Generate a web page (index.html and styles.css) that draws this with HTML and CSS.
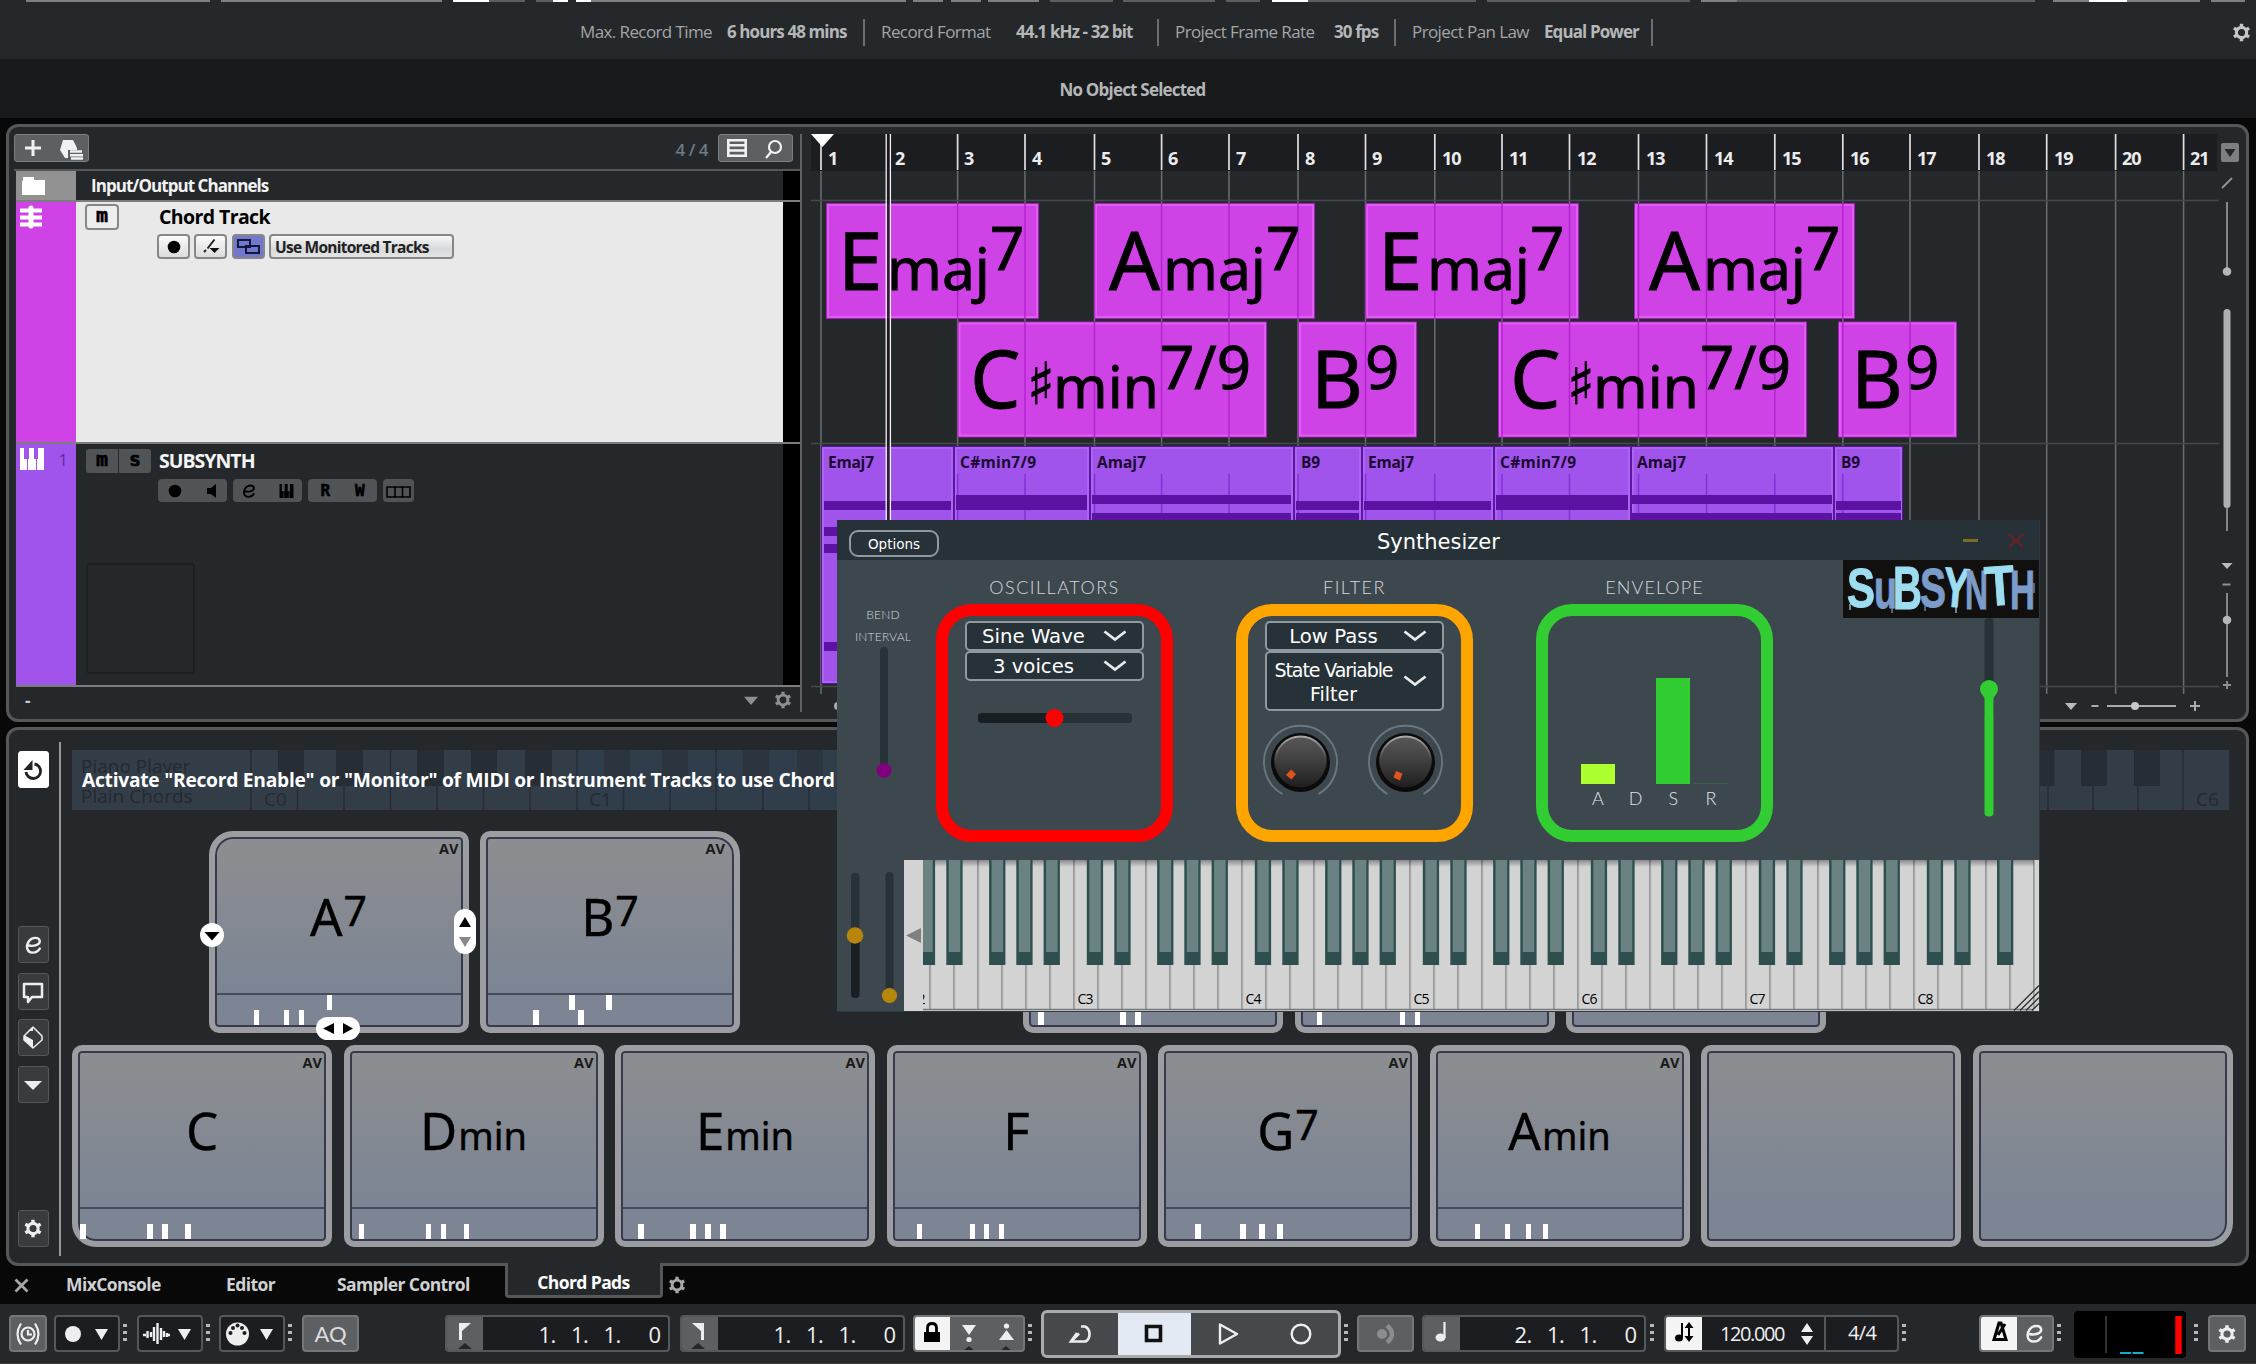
FILE: index.html
```html
<!DOCTYPE html>
<html lang="en">
<head>
<meta charset="utf-8">
<title>Project</title>
<link rel="stylesheet" href="styles.css">
</head>
<body>
<svg class="defs" width="0" height="0" aria-hidden="true">
  <symbol id="gear" viewBox="0 0 20 20"><path fill="none" stroke="currentColor" stroke-width="3.2" d="M10 4.6a5.4 5.4 0 1 0 0 10.8a5.4 5.4 0 1 0 0-10.8z"/><path stroke="currentColor" stroke-width="3.6" d="M10 .8v3.4M10 15.8v3.4M2 5.4l3 1.7M15 12.9l3 1.7M2 14.600l3-1.7M15 7.100l3-1.7"/></symbol>
  <symbol id="down" viewBox="0 0 12 12"><path fill="currentColor" d="M0 1h12L6 12z"/></symbol>
  <symbol id="e" viewBox="0 0 20 20"><path fill="none" stroke="currentColor" stroke-width="2.600" stroke-linecap="round" d="M4.500 10.500C10 12 17.500 10 17 5.500C16.500 1.500 9 .5 5 5.500C1 11 2.500 18.500 9 18.500C12.500 18.500 15.500 16.500 17 14"/></symbol>
  <symbol id="chev" viewBox="0 0 24 12"><path fill="none" stroke="#e8eaeb" stroke-width="2.800" d="M1.500 1.500L12 9.500L22.500 1.500"/></symbol>
  <symbol id="keys" viewBox="0 0 24 24"><path fill="currentColor" d="M0 0h4v12h3v12H0zM9 0h5v12h2v12H8V12h1zM18 0h6v24h-7V12h1z"/></symbol>
</svg>

<svg class="strip" width="2256" height="2" viewBox="0 0 2256 2"><path stroke="#7d8083" stroke-width="2" d="M26 1H210M221 1H442M591 1H906M913 1H943M951 1H981M988 1H1039M1701 1H1737M2053 1H2089M2127 1H2200M2211 1H2245"/><path stroke="#5c5f62" stroke-width="2" d="M489 1H525M536 1H553M1050 1H1113M1123 1H1215M1226 1H1260M1308 1H1476M1487 1H1690M1737 1H2035"/><path stroke="#fff" stroke-width="2" d="M453 1H489M553 1H568M576 1H591M1272 1H1308M2089 1H2127"/></svg>

<header class="infoline">
  <dl>
    <dt style="width:147px">Max. Record Time</dt><dd style="width:138px">6 hours 48 mins</dd>
    <dt style="width:135px">Record Format</dt><dd style="width:143px">44.1 kHz - 32 bit</dd>
    <dt style="width:159px">Project Frame Rate</dt><dd style="width:62px">30 fps</dd>
    <dt style="width:132px">Project Pan Law</dt><dd style="width:109px">Equal Power</dd>
  </dl>
  <svg class="gear" width="19" height="19"><use href="#gear"/></svg>
</header>
<div class="objline">No Object Selected</div>

<main>
<section class="panel project">
  <div class="tracklist">
    <div class="tl-tools">
      <div class="toolpair"><svg width="73" height="26" viewBox="0 0 73 26"><path stroke="#f2f2f2" stroke-width="3" d="M10 13h16M18 5v16"/><path fill="#f2f2f2" d="M48 5h10l4 8v2h-9v8h-3l-5-8z"/><path stroke="#f2f2f2" stroke-width="2.500" d="M55 16.500h12M55 20.200h13M56 23.500h12"/></svg></div>
      <span class="count">4 / 4</span>
      <div class="toolpair"><svg width="73" height="26" viewBox="0 0 73 26"><path fill="none" stroke="#f2f2f2" stroke-width="2.600" d="M9.300 5.300h17.400v15.400H9.300zM9 10.300h18M9 15.500h18"/><g fill="none" stroke="#f2f2f2" stroke-width="2.200"><circle cx="56" cy="12" r="6"/><path d="M52 17l-5 6"/></g></svg></div>
    </div>
    <div class="track folder">
      <div class="color"><svg width="26" height="22" viewBox="0 0 26 22"><path fill="#fff" d="M2 2h11v3h11v15H1V6h1z"/></svg></div>
      <div class="body"><span>Input/Output Channels</span></div><i class="end"></i>
    </div>
    <div class="track chord">
      <div class="color"><svg width="22" height="24" viewBox="0 0 22 24"><path stroke="#fff" stroke-width="4" d="M0 5.500h22M0 12.500h22M0 19.500h22"/><path stroke="#fff" stroke-width="5" stroke-linecap="round" d="M11 3v18"/></svg></div>
      <div class="body">
        <div class="line1"><b class="ms">m</b><span class="name">Chord Track</span></div>
        <div class="line2">
          <b class="btn"><svg width="33" height="25"><circle cx="17" cy="13" r="6.300"/></svg></b>
          <b class="btn"><svg width="33" height="25"><path fill="none" stroke="#222" stroke-width="2" d="M10 18l2-2M13.500 14.500l7-9"/><path fill="#111" d="M15.500 14h10l-5 5z"/></svg></b>
          <b class="btn on"><svg width="33" height="25"><path fill="none" stroke="#15173a" stroke-width="2" d="M6 6h12v7H6zM14 12h13v7H14z"/></svg></b>
          <span class="combo">Use Monitored Tracks</span>
        </div>
      </div><i class="end"></i>
    </div>
    <div class="track inst">
      <div class="color"><svg width="24" height="22" viewBox="0 0 24 24" preserveAspectRatio="none" color="#fff"><use href="#keys"/></svg><small>1</small></div>
      <div class="body">
        <div class="line1"><b class="ms">m</b><b class="ms s">s</b><span class="name">SUBSYNTH</span></div>
        <div class="line2">
          <b class="grp"><svg width="69" height="23"><circle cx="17" cy="12" r="6.300"/><path d="M49 9h4l5-4v14l-5-4h-4z"/></svg></b>
          <b class="grp"><svg width="69" height="23"><use href="#e" x="9" y="5" width="14" height="14"/><use href="#keys" x="45" y="5" width="17" height="14"/></svg></b>
          <b class="grp rw"><span>R</span><span>W</span></b>
          <b class="grp"><svg width="31" height="23"><path fill="none" stroke="#000" stroke-width="1.600" d="M4 8h23v10H4zM12 8v10M19.500 8v10"/></svg></b>
        </div>
        <div class="empty"></div>
      </div><i class="end"></i>
    </div>
    <div class="tl-foot"><span>-</span><svg width="14" height="9" viewBox="0 0 12 12" preserveAspectRatio="none"><use href="#down"/></svg><svg width="18" height="18"><use href="#gear"/></svg></div>
  </div>
  <div class="timeline">
  <svg width="1409" height="586" viewBox="811 134 1409 586">
    <defs>
      <path id="bars" d="M821 0V700M957.600 0V700M1025 0V700M1094.500 0V700M1161.600 0V700M1229 0V700M1298 0V700M1365.500 0V700M1434.800 0V700M1502 0V700M1569.500 0V700M1638.500 0V700M1706.500 0V700M1774.800 0V700M1842.800 0V700M1910 0V700M1979 0V700M2046.700 0V700M2115.600 0V700M2183.600 0V700"/>
      <clipPath id="cr"><path d="M811 134h1409v36H811z"/></clipPath>
      <clipPath id="cg"><path d="M811 171h1409v523H811z"/></clipPath>
      <clipPath id="cb"><path d="M826 204H1039V319H826zM1094 204H1315V319H1094zM1365 204H1579V319H1365zM1634 204H1855V319H1634zM958 322H1267V437H958zM1298 322H1417V437H1298zM1498 322H1807V437H1498zM1838 322H1957V437H1838z"/></clipPath>
      <clipPath id="cm"><path d="M822 474H1903V683H822z"/></clipPath>
      <g id="maj"><text class="c2" x="0" y="0" textLength="103" lengthAdjust="spacingAndGlyphs">maj</text><text class="c3" x="103" y="-19.500">7</text></g>
      <g id="csh"><text class="c1" x="0" y="0">C</text><text class="sh" x="57" y="-4">♯</text><text class="c2" x="83" y="0" textLength="106" lengthAdjust="spacingAndGlyphs">min</text><text class="c3" x="190" y="-19.500">7/9</text></g>
      <g id="b9"><text class="c1" x="0" y="0">B</text><text class="c3" x="54" y="-19.500">9</text></g>
    </defs>
    <path fill="#1c1d21" d="M811 134h1406v37H811z"/>
    <use href="#bars" stroke="#6a6d70" stroke-width="1.500" clip-path="url(#cg)"/>
    <use href="#bars" stroke="#e0e0e0" stroke-width="1.700" clip-path="url(#cr)"/>
    <path stroke="#45484a" stroke-width="1.500" d="M811 200.500H2219M811 443.500H2219M811 686.500H2219"/>
    <g class="ruler"><text x="828" y="165">1</text><text x="895" y="165">2</text><text x="964" y="165">3</text><text x="1032" y="165">4</text><text x="1101" y="165">5</text><text x="1168" y="165">6</text><text x="1236" y="165">7</text><text x="1305" y="165">8</text><text x="1372" y="165">9</text><text x="1442" y="165">10</text><text x="1509" y="165">11</text><text x="1577" y="165">12</text><text x="1646" y="165">13</text><text x="1714" y="165">14</text><text x="1782" y="165">15</text><text x="1850" y="165">16</text><text x="1917" y="165">17</text><text x="1986" y="165">18</text><text x="2054" y="165">19</text><text x="2122" y="165">20</text><text x="2190" y="165">21</text></g>
    <g class="ev">
      <rect x="826.500" y="203.500" width="212" height="115"/><rect x="1094.500" y="203.500" width="220" height="115"/><rect x="1365.500" y="203.500" width="213" height="115"/><rect x="1634.500" y="203.500" width="220" height="115"/>
      <rect x="958" y="322" width="308.500" height="115"/><rect x="1298.500" y="322" width="118" height="115"/><rect x="1498.500" y="322" width="308" height="115"/><rect x="1838.500" y="322" width="118" height="115"/>
    </g>
    <g class="evin">
      <rect x="828" y="205" width="209" height="112"/><rect x="1096" y="205" width="217" height="112"/><rect x="1367" y="205" width="210" height="112"/><rect x="1636" y="205" width="217" height="112"/>
      <rect x="959.500" y="323.500" width="305.500" height="112"/><rect x="1300" y="323.500" width="115" height="112"/><rect x="1500" y="323.500" width="305" height="112"/><rect x="1840" y="323.500" width="115" height="112"/>
    </g>
    <use href="#bars" stroke="#b324cf" stroke-width="1.500" clip-path="url(#cb)"/>
    <g class="clip">
      <rect x="821.500" y="446.500" width="132" height="237"/><rect x="954.500" y="446.500" width="135" height="237"/><rect x="1090.500" y="446.500" width="203" height="237"/><rect x="1294.500" y="446.500" width="67" height="237"/><rect x="1362.500" y="446.500" width="131" height="237"/><rect x="1494.500" y="446.500" width="136" height="237"/><rect x="1631.500" y="446.500" width="202" height="237"/><rect x="1834.500" y="446.500" width="68" height="237"/>
    </g>
    <g class="clipin">
      <rect x="823" y="448" width="129" height="234"/><rect x="956" y="448" width="132" height="234"/><rect x="1092" y="448" width="200" height="234"/><rect x="1296" y="448" width="64" height="234"/><rect x="1364" y="448" width="128" height="234"/><rect x="1496" y="448" width="133" height="234"/><rect x="1633" y="448" width="199" height="234"/><rect x="1836" y="448" width="65" height="234"/>
    </g>
    <use href="#bars" stroke="#8430d8" stroke-width="1.500" clip-path="url(#cm)"/>
    <path fill="#5c12a3" d="M824 501H951V510H824zM824 527H951V536H824zM824 544H951V553H824zM824 642H951V651H824zM956 495H1087V510H956zM1092 495H1291V504H1092zM1092 513H1291V522H1092zM1296 501H1359V510H1296zM1296 513H1359V522H1296zM1364 501H1491V510H1364zM1496 495H1628V510H1496zM1632 495H1832V504H1632zM1632 513H1832V522H1632zM1836 501H1901V510H1836zM1836 513H1901V522H1836z"/>
    <g class="cl"><text x="828" y="468" textLength="46">Emaj7</text><text x="960" y="468" textLength="76">C#min7/9</text><text x="1097" y="468" textLength="49">Amaj7</text><text x="1301" y="468" textLength="19">B9</text><text x="1368" y="468" textLength="46">Emaj7</text><text x="1500" y="468" textLength="76">C#min7/9</text><text x="1637" y="468" textLength="49">Amaj7</text><text x="1841" y="468" textLength="19">B9</text></g>
    <g class="big"><text class="c1" x="838" y="289.500">E</text><use href="#maj" x="887" y="289.500"/>
      <text class="c1" x="1109" y="289.500">A</text><use href="#maj" x="1163" y="289.500"/>
      <text class="c1" x="1378" y="289.500">E</text><use href="#maj" x="1427" y="289.500"/>
      <text class="c1" x="1649" y="289.500">A</text><use href="#maj" x="1703" y="289.500"/>
      <use href="#csh" x="970" y="408"/><use href="#b9" x="1311" y="408"/><use href="#csh" x="1510" y="408"/><use href="#b9" x="1851" y="408"/></g>
    <path fill="#fff" d="M811 134h23l-11.500 13z"/>
    <path fill="#1a1320" d="M887 134h3v560h-3z" opacity=".85"/><path stroke="#f2f2f2" stroke-width="1.300" d="M886.200 134V694M890.400 134V694"/>
    <g stroke="#a9abad" stroke-width="2"><path d="M2091.500 706h7M2107 706h69M2190 706h10M2195 701v10"/><circle cx="2135" cy="706" r="4" fill="#c6c8ca" stroke="none"/></g><path fill="#bbb" d="M2065 703h12l-6 7z"/>
    <circle cx="838" cy="706" r="4" fill="#aaa"/>
  </svg>
  </div>
  <svg class="vscroll" width="26" height="592" viewBox="2220 127 26 592">
    <rect x="2221" y="143" width="18" height="19" rx="2" fill="#7d7f81"/><path fill="#26282a" d="M2224.500 149h11l-5.500 8z"/>
    <g stroke="#8f9193" stroke-width="1.800"><path d="M2222 188l10-10M2227 202v70M2227 508v23M2227 593v84M2222.500 584.500h8M2223 685h8M2227 681v8"/></g>
    <rect x="2223.500" y="309" width="7" height="199" rx="3.500" fill="#aeb0b2"/><circle cx="2227" cy="271.500" r="4.300" fill="#b5b7b9"/><circle cx="2227" cy="620" r="4.300" fill="#b5b7b9"/><path fill="#bbb" d="M2221.500 563h11l-5.500 6z"/>
  </svg>
</section>

<section class="panel lower">
  <nav class="side">
    <b class="w"><svg width="30" height="38"><path fill="none" stroke="#222" stroke-width="2.800" d="M16.500 13A7.300 7.300 0 1 1 8 21"/><path fill="#222" d="M14.500 9v10H5.500z"/></svg></b>
    <b class="g1"><svg width="30" height="37" color="#eee"><use href="#e" x="6.500" y="10" width="18" height="18"/></svg></b>
    <b><svg width="30" height="37"><path fill="none" stroke="#eee" stroke-width="2.500" stroke-linejoin="round" d="M6 11h18v13H14l-4 5v-5H6z"/></svg></b>
    <b><svg width="30" height="37"><path fill="none" stroke="#eee" stroke-width="1.500" stroke-linejoin="round" d="M6 17l9-9l9 9v4l-9 8l-9-8z"/><path fill="#eee" d="M6 16l9 5v8l-9-8zM10 12l5-4v4z"/></svg></b>
    <b><svg width="30" height="37"><path fill="#eee" d="M6 15h18l-9 9z"/></svg></b>
    <b class="g2"><svg width="30" height="37" color="#eee"><use href="#gear" x="5.500" y="9" width="19" height="19"/></svg></b>
  </nav>
  <div class="padzone">
    <div class="remote">
      <svg width="2157" height="60" viewBox="72 750 2157 60">
        <path fill="#333d48" d="M72 750h2157v60H72z"/><path fill="#2c3d50" opacity=".45" d="M577 750h300v60H577z"/>
        <path stroke="#272d34" stroke-width="1.500" d="M251 750v60M297.500 750v60M344 750v60M390.500 750v60M437 750v60M483.500 750v60M530 750v60M577 750v60M623.500 750v60M670 750v60M716 750v60M763 750v60M809 750v60M2048 750v60M2093 750v60M2138 750v60M2183 750v60"/>
        <path fill="#272d34" d="M278 750h26v36h-26zM336 750h27v36h-27zM417 750h27v36h-27zM471 750h26v36h-26zM525 750h27v36h-27zM2028 750h26.500v36H2028zM2081 750h26v36h-26zM2134 750h26v36h-26z"/><path fill="#2c353f" d="M604 750h26v36h-26zM662 750h26v36h-26zM743 750h26v36h-26zM797 750h26v36h-26z"/>
        <g class="kt"><text x="81" y="773">Piano Player</text><text x="81" y="803">Plain Chords</text><text x="264" y="806">C0</text><text x="589" y="806">C1</text><text x="2196" y="806">C6</text></g>
      </svg>
      <p>Activate "Record Enable" or "Monitor" of MIDI or Instrument Tracks to use Chord Pads</p>
    </div>
    <div class="pads top">
      <div class="pad tl"><em>AV</em><h3>A<sup>7</sup></h3><div class="kb"><i style="left:37px"></i><i style="left:67px"></i><i style="left:82px"></i><i class="up" style="left:110px"></i></div>
        <span class="hc"><svg width="24" height="24"><circle cx="12" cy="12" r="12" fill="#fff"/><path d="M4.500 9h15L12 17.500z"/></svg></span>
        <span class="hv"><svg width="22" height="45"><rect width="22" height="45" rx="11" fill="#fff"/><path d="M5 18h12l-6-10z"/><path fill="#888" d="M5 28h12l-6 10z"/></svg></span>
        <span class="hh"><svg width="44" height="23"><rect width="44" height="23" rx="11.500" fill="#fff"/><path d="M18 6v11L7 11.500zM27 6v11l10-5.500z"/></svg></span>
      </div>
      <div class="pad tr"><em>AV</em><h3>B<sup>7</sup></h3><div class="kb"><i style="left:45px"></i><i class="up" style="left:81px"></i><i style="left:90px"></i><i class="up" style="left:118px"></i></div></div>
      <div class="gap"></div>
      <div class="pad"><div class="kb"><i style="left:7px"></i><i style="left:89px"></i><i style="left:104px"></i></div></div>
      <div class="pad"><div class="kb"><i style="left:14px"></i><i style="left:97px"></i><i style="left:112px"></i></div></div>
      <div class="pad"><div class="kb"></div></div>
    </div>
    <div class="pads">
      <div class="pad bl"><em>AV</em><h3>C</h3><div class="kb"><i style="left:0px"></i><i style="left:67px"></i><i style="left:82px"></i><i style="left:105px"></i></div></div>
      <div class="pad"><em>AV</em><h3>D<small>min</small></h3><div class="kb"><i style="left:7px"></i><i style="left:74px"></i><i style="left:89px"></i><i style="left:112px"></i></div></div>
      <div class="pad"><em>AV</em><h3>E<small>min</small></h3><div class="kb"><i style="left:15px"></i><i style="left:67px"></i><i style="left:82px"></i><i style="left:97px"></i></div></div>
      <div class="pad"><em>AV</em><h3>F</h3><div class="kb"><i style="left:22px"></i><i style="left:75px"></i><i style="left:89px"></i><i style="left:104px"></i></div></div>
      <div class="pad"><em>AV</em><h3>G<sup>7</sup></h3><div class="kb"><i style="left:29px"></i><i style="left:74px"></i><i style="left:93px"></i><i style="left:111px"></i></div></div>
      <div class="pad"><em>AV</em><h3>A<small>min</small></h3><div class="kb"><i style="left:37px"></i><i style="left:67px"></i><i style="left:88px"></i><i style="left:105px"></i></div></div>
      <div class="pad off"></div>
      <div class="pad off br"></div>
    </div>
  </div>
</section>
</main>

<nav class="tabs">
  <svg class="x" width="15" height="15"><path stroke="#a6a6a6" stroke-width="2.800" d="M1.500 1.500l12 12M13.500 1.500l-12 12"/></svg>
  <a class="t1">MixConsole</a><a class="t2">Editor</a><a class="t3">Sampler Control</a><a class="active">Chord Pads</a>
  <svg class="gear" width="18" height="18"><use href="#gear"/></svg>
</nav>

<footer class="transport">
  <b class="box lit" style="width:38px"><svg width="36" height="34"><g fill="none" stroke="#eee" stroke-width="2.200"><circle cx="18" cy="17" r="6.500"/><path d="M18 13v4.500h4M11 6.500q-7 10.500 0 21M25 6.500q7 10.500 0 21"/></g></svg></b>
  <b class="box" style="width:66px;margin-left:7px"><svg width="64" height="34"><circle cx="18" cy="17" r="8" fill="#eee"/><path fill="#eee" d="M40 12h13l-6.500 11z"/></svg></b>
  <i class="dots" style="margin-left:3px"></i>
  <b class="box" style="width:66px;margin-left:10px"><svg width="64" height="34"><path fill="none" stroke="#eee" stroke-width="2.400" d="M5 18h3M9.500 14v7M13 15v5M16 10v14M19.500 6v21M23 11v12M26 14v6M29 16v4M29 18h3"/><path fill="#eee" d="M40 12h13l-6.500 11z"/></svg></b>
  <i class="dots" style="margin-left:3px"></i>
  <b class="box" style="width:66px;margin-left:9px"><svg width="64" height="34"><circle cx="17.500" cy="17" r="11.500" fill="#eee"/><g fill="#1c1d21"><circle cx="10.500" cy="16" r="2"/><circle cx="13" cy="11" r="2"/><circle cx="17.500" cy="8.500" r="2"/><circle cx="22" cy="11" r="2"/><circle cx="24.500" cy="16" r="2"/></g><path fill="#eee" d="M40 12h13l-6.500 11z"/></svg></b>
  <i class="dots" style="margin-left:3px"></i>
  <b class="box lit aq" style="width:57px;margin-left:10px">AQ</b>
  <b class="box pos" style="width:225px;margin-left:86px"><span class="cap"><svg width="37" height="35"><path fill="#eee" d="M13 9h12l-9 8v9h-3z"/><path fill="#24282b" d="M12 35l7-6l7 6z"/></svg></span><span class="num"><i>1.</i><i>1.</i><i>1.</i>0</span></b>
  <b class="box pos" style="width:225px;margin-left:10px"><span class="cap"><svg width="36" height="35"><path fill="#eee" d="M11 9h12v17h-3v-9z"/><path fill="#24282b" d="M10 35l7-6l7 6z"/></svg></span><span class="num"><i>1.</i><i>1.</i><i>1.</i>0</span></b>
  <b class="box lit lock" style="width:112px;margin-left:8px"><svg width="112" height="37"><path fill="#f4f4f4" d="M2 0H37V37H2Q0 37 0 35V2Q0 0 2 0z"/><path d="M11 17h16v10H11z"/><path fill="none" stroke="#000" stroke-width="2.800" d="M14.500 18v-5q0-4.500 4.500-4.500t4.500 4.500v5"/><path fill="#eee" d="M49 10h14l-7 10zM86 25h15l-7.500-10z"/><circle cx="56" cy="24.500" r="2.600" fill="#eee"/><circle cx="93.500" cy="11" r="2.600" fill="#eee"/><path fill="#24282b" d="M49 37l7-6l7 6zM86 37l7-6l7 6z"/></svg></b>
  <i class="dots" style="margin-left:3px"></i>
  <div class="play">
    <b><svg width="28" height="24"><path fill="none" stroke="#eee" stroke-width="2.600" d="M10 11L4 19.500H18.500A6.500 8 0 0 0 18 4.500H14M4 19.500l8-8"/></svg></b>
    <b class="stop"><svg width="20" height="20"><path fill="none" stroke="#111" stroke-width="3.600" d="M2.500 2.500h14v14h-14z"/></svg></b>
    <b><svg width="24" height="24"><path fill="none" stroke="#eee" stroke-width="2.400" stroke-linejoin="round" d="M4 2.500v19L21 12z"/></svg></b>
    <b><svg width="24" height="24"><circle cx="12" cy="12" r="9.300" fill="none" stroke="#eee" stroke-width="2.400"/></svg></b>
  </div>
  <i class="dots" style="margin-left:3px"></i>
  <b class="box lit dim" style="width:57px;margin-left:9px"><svg width="55" height="34"><circle cx="24" cy="17" r="5" fill="#8b8e90"/><path fill="none" stroke="#8b8e90" stroke-width="4.500" d="M29 8.500q10 8.500 0 17"/></svg></b>
  <b class="box pos" style="width:224px;margin-left:8px"><span class="cap"><svg width="36" height="35"><ellipse cx="17.500" cy="23.500" rx="5" ry="4" fill="#eee"/><path stroke="#eee" stroke-width="2.200" d="M21.500 8v16"/></svg></span><span class="num"><i>2.</i><i>1.</i><i>1.</i>0</span></b>
  <i class="dots" style="margin-left:4px"></i>
  <b class="box tempo" style="width:235px;margin-left:10px"><span class="wcap"><svg width="37" height="35"><ellipse cx="14" cy="24" rx="4" ry="3.500"/><path stroke="#000" stroke-width="2" d="M17 9v15M24 12v12"/><path d="M19.500 14h9L24 8zM19.500 22h9L24 28z"/></svg></span><span class="bpm">120.000</span><svg width="14" height="24"><path fill="#eee" d="M1 10h12L7 1zM1 14h12l-6 9z"/></svg><span class="sig">4/4</span></b>
  <i class="dots" style="margin-left:3px"></i>
  <b class="box lit met" style="width:75px;margin-left:73px"><span class="wcap"><svg width="37" height="35"><path fill="none" stroke="#000" stroke-width="3" d="M14 25.500h12L21 9h-2zM18 21l7-11"/></svg></span><svg width="37" height="35" color="#eee"><use href="#e" x="9" y="8" width="19" height="19"/></svg></b>
  <i class="dots" style="margin-left:3px"></i>
  <svg class="meter" width="112" height="47"><rect width="112" height="47" rx="4"/><path stroke="#444" stroke-width="1.500" d="M32 5v37"/><path stroke="#0fb0cc" stroke-width="2" d="M46 42h11M58.500 42h11"/><path stroke="#f00" stroke-width="6.500" d="M104.500 5v38"/></svg>
  <i class="dots" style="margin-left:8px"></i>
  <b class="box lit" style="width:38px;margin-left:10px"><svg width="36" height="34" color="#eee"><use href="#gear" x="8.500" y="7.500" width="19" height="19"/></svg></b>
</footer>

<aside class="synth">
  <div class="titlebar"><button>Options</button><h1>Synthesizer</h1><svg class="wc" width="62" height="16"><path stroke="#7d6a24" stroke-width="3" d="M0 7.500h15"/><path stroke="#6b1f26" stroke-width="2" d="M46 1l14 13M60 1L46 14"/></svg></div>
  <div class="deck">
    <div class="bend"><span>BEND</span><span>INTERVAL</span><svg width="16" height="132" viewBox="875.500 647 16 132"><rect x="879.500" y="647" width="8" height="128" rx="4" fill="#273238"/><circle cx="883.500" cy="770.500" r="7.500" fill="#800080"/></svg></div>
    <div class="mod osc"><h2>OSCILLATORS</h2><div class="frame">
      <div class="sel"><span>Sine Wave</span><svg width="24" height="12"><use href="#chev"/></svg></div>
      <div class="sel"><span>3 voices</span><svg width="24" height="12"><use href="#chev"/></svg></div>
      <svg class="hs" width="154" height="20"><rect y="5" width="154" height="10" rx="4" fill="#273238"/><path fill="#181e21" d="M4 5h72v10H4Q0 15 0 11V9Q0 5 4 5z"/><circle cx="76.500" cy="10" r="9" fill="red"/></svg>
    </div></div>
    <div class="mod fil"><h2>FILTER</h2><div class="frame">
      <div class="sel"><span>Low Pass</span><svg width="24" height="12"><use href="#chev"/></svg></div>
      <div class="sel tall"><span><u>State Variable</u><br>Filter</span><svg width="24" height="12"><use href="#chev"/></svg></div>
      <svg class="knobs" width="184" height="78" viewBox="1261 722 184 78">
        <defs><linearGradient id="kg" x2="0" y2="1"><stop offset="0" stop-color="#585858"/><stop offset=".5" stop-color="#3e3e3e"/><stop offset="1" stop-color="#1e1e1e"/></linearGradient><linearGradient id="kr" x2="0" y2="1"><stop offset="0" stop-color="#a8a8a8"/><stop offset=".3" stop-color="#666"/><stop offset=".75" stop-color="#222" stop-opacity="0"/></linearGradient>
        <g id="knob"><path fill="none" stroke="#6b777d" stroke-width="1.800" d="M-18 31.500A36.500 36.500 0 1 1 18 31.500"/><circle r="29.500" fill="#0b0b0b"/><circle cy="-.5" r="25.500" fill="url(#kg)" stroke="url(#kr)" stroke-width="2"/></g></defs>
        <use href="#knob" x="1300.500" y="762.500"/><use href="#knob" x="1405.500" y="762.500"/>
        <path fill="#e0521f" d="M1291 769.500l5 4.500l-4.500 5.500l-5.500-4.500zM1396 771l6.500 2.500l-2.500 7l-6.500-3z"/>
      </svg>
    </div></div>
    <div class="mod env"><h2>ENVELOPE</h2><div class="frame">
      <div class="bars"><div><i class="a" style="height:20px"></i>A</div><div><i></i>D</div><div><i class="s" style="height:106px"></i>S</div><div><i class="r" style="height:1px"></i>R</div></div>
    </div></div>
    <div class="out">
      <svg width="196" height="58" viewBox="1843 560 196 58"><path fill="#12100e" d="M1843 560h196v58h-196z"/>
        <g class="logo"><text x="1847" y="607" textLength="28" lengthAdjust="spacingAndGlyphs">S</text><text class="d" x="1874" y="608" textLength="23" lengthAdjust="spacingAndGlyphs">u</text><text class="b" x="1893" y="609" textLength="29" lengthAdjust="spacingAndGlyphs">B</text><text class="d" x="1920" y="607" textLength="26" lengthAdjust="spacingAndGlyphs">S</text><text x="1943" y="607" textLength="26" lengthAdjust="spacingAndGlyphs" transform="rotate(5 1956 590)">Y</text><text class="d" x="1965" y="609" textLength="23" lengthAdjust="spacingAndGlyphs">N</text><text x="1985" y="605" textLength="30" lengthAdjust="spacingAndGlyphs" transform="rotate(-4 2000 590)">T</text><text class="d" x="2010" y="609" textLength="25" lengthAdjust="spacingAndGlyphs">H</text></g>
        <path stroke="#9edcf0" stroke-width="1.200" d="M1850 604v6M1956 606v7"/><path stroke="#7b9bc8" stroke-width="1.200" d="M1925 604v7M1892 606v7M2034 583v10"/></svg>
      <svg class="vol" width="20" height="200" viewBox="1979 617 20 200"><rect x="1984.500" y="618" width="9" height="100" rx="4" fill="#273238"/><rect x="1984.500" y="686" width="9" height="130.500" rx="4" fill="#32cd32"/><path fill="#32cd32" d="M1981 692h16l-4 7h-8z"/><circle cx="1989" cy="689" r="9" fill="#32cd32"/></svg>
    </div>
  </div>
  <div class="bottom">
    <svg width="67" height="151" viewBox="837 860 67 151"><rect x="851" y="873" width="8.500" height="125" rx="4" fill="#273238"/><path fill="#181e21" d="M851 936h8.500v58q0 4-4.300 4t-4.200-4z"/><circle cx="855" cy="935.500" r="8.300" fill="#b8860b"/><rect x="885.500" y="872" width="8" height="124" rx="4" fill="#273238"/><circle cx="889.500" cy="995.500" r="7.600" fill="#b8860b"/></svg>
    <svg width="1135" height="151" viewBox="904 860 1135 151">
      <defs>
        <linearGradient id="sh" x2="0" y2="1"><stop offset="0" stop-color="#000" stop-opacity=".35"/><stop offset="1" stop-color="#000" stop-opacity="0"/></linearGradient>
        <pattern id="white" x="905.300" y="860" width="24" height="151" patternUnits="userSpaceOnUse"><rect x="0" width="1.300" height="150" fill="#808080"/></pattern>
        <g id="bk"><rect width="16.300" height="105" fill="#2f4f4f"/><rect x="2.500" width="11.500" height="92" fill="#6a8281"/></g>
        <g id="oct"><use href="#bk" x="13.500"/><use href="#bk" x="41"/><use href="#bk" x="83.800"/><use href="#bk" x="111"/><use href="#bk" x="138.300"/></g>
        <clipPath id="kc"><path d="M923 860h1116v151H923z"/></clipPath>
      </defs>
      <path fill="#d3d3d3" d="M904 860h1135v151H904z"/>
      <path fill="url(#white)" d="M924 860h1111v149H924z"/><path fill="url(#sh)" d="M923 860h1111v7H923z"/><path stroke="#777" stroke-width="1.500" d="M923 1009.500h1111"/>
      <g clip-path="url(#kc)"><use href="#oct" x="905.300" y="860"/><use href="#oct" x="1073.300" y="860"/><use href="#oct" x="1241.300" y="860"/><use href="#oct" x="1409.300" y="860"/><use href="#oct" x="1577.300" y="860"/><use href="#oct" x="1745.300" y="860"/><use href="#bk" x="1926.800" y="860"/><use href="#bk" x="1954.300" y="860"/><use href="#bk" x="1997" y="860"/>
      <g class="kl"><text x="909.500" y="1004">C2</text><text x="1077.500" y="1004">C3</text><text x="1245.500" y="1004">C4</text><text x="1413.500" y="1004">C5</text><text x="1581.500" y="1004">C6</text><text x="1749.500" y="1004">C7</text><text x="1917.500" y="1004">C8</text></g></g>
      <path fill="#808080" d="M906 935.500l15-7.500v15z"/>
      <path stroke="#333" stroke-width="1.300" d="M2014 1010.500l25-25M2020 1010.500l19-19M2026 1010.500l13-13M2032 1010.500l7-7"/>
    </svg>
  </div>
</aside>
</body>
</html>
```
FILE: styles.css
```css
* { box-sizing: border-box; margin: 0; padding: 0; }
body { width: 2256px; height: 1364px; overflow: hidden; position: relative; display: flex; flex-direction: column; background: #080808; color: #c8cacc; font: 17px/1 "Open Sans", "Noto Sans", sans-serif; }
svg { display: block; flex: none; }
b, em, i, u { font-weight: inherit; font-style: normal; text-decoration: none; }
.defs { position: absolute; }
.strip { background: #24282b; }

.infoline { height: 57px; flex: none; background: #24282b; display: flex; align-items: center; padding: 4px 5px 0 580px; justify-content: space-between; }
.infoline dl { display: flex; align-items: center; white-space: nowrap; color: #a3a5a7; line-height: 27px; }
.infoline dt { letter-spacing: -.6px; margin-top: -2px; }
.infoline dd { font-weight: 700; letter-spacing: -.9px; color: #b4b6b8; height: 27px; line-height: 25px; border-right: 2px solid #6b6e70; margin-right: 16px; }
.infoline .gear { color: #c4c6c8; }
.objline { height: 59px; flex: none; background: #181a1b; display: flex; align-items: center; justify-content: center; padding-left: 9px; padding-top: 1px; font-weight: 700; letter-spacing: -.8px; color: #b4b6b8; }

main { padding: 6px 7px 0 6px; flex: none; }
.panel { border: 3px solid #55585b; border-radius: 12px; background: #24282b; display: flex; }
.project { height: 598px; }
.lower { height: 539px; margin-top: 5px; }

.tracklist { width: 791px; padding-left: 7px; flex: none; display: flex; flex-direction: column; }
.tl-tools { height: 44px; display: flex; align-items: flex-start; padding: 7px 7px 0 0; margin-left: -2px; border-bottom: 2px solid #55585b; }
.toolpair { width: 75px; height: 28px; background: #5d6063; border: 1px solid #7b7f82; border-radius: 3px; }
.count { margin-left: auto; margin-right: 10px; line-height: 31px; color: #6f7a83; font-weight: 600; letter-spacing: -.5px; }
.track { display: flex; border-bottom: 2px solid #7a7c7e; }
.track .color { width: 60px; flex: none; position: relative; }
.track .body { flex: 1; }
.track .end { width: 17px; background: #000; }
.folder { height: 31px; }
.folder .color { background: #929292; padding: 4px 5px; }
.folder .body { padding-left: 15px; font-weight: 700; line-height: 29px; color: #f2f2f2; letter-spacing: -.95px; }
.chord { height: 242px; }
.chord .color { background: #cf42e6; padding: 3px 4px; }
.chord .body { background: #e9e9e9; color: #000; padding: 2px 0 0 9px; }
.line1 { display: flex; align-items: center; }
.ms { width: 34px; height: 26px; border: 2px solid #85878a; border-radius: 4px; background: #eee; font: bold 20px/18px "DejaVu Sans Mono", monospace; text-align: center; color: #000; -webkit-text-stroke: .6px #000; }
.name { font-weight: 700; font-size: 19.500px; letter-spacing: -.6px; margin-left: 40px; }
.line2 { display: flex; margin: 4px 0 0 72px; gap: 4px; }
.btn { width: 33px; height: 25px; border: 2px solid #85878a; border-radius: 4px; background: linear-gradient(#fafafa, #dcdcdc); }
.btn svg { margin: -2px; }
.btn.on { background: #7278cc; margin-left: 1px; }
.combo { width: 185px; height: 25px; border: 2px solid #85878a; border-radius: 4px; background: linear-gradient(#f8f8f8, #d8d9db 60%, #e4e4e4); font-weight: 700; font-size: 15.500px; line-height: 23px; letter-spacing: -.75px; padding-left: 4px; white-space: nowrap; color: #222; }
.inst { height: 243px; }
.inst .color { background: #a054eb; padding: 4px; display: flex; justify-content: space-between; }
.inst small { color: #5a2ea0; font-size: 17px; padding-right: 4px; line-height: 24px; }
.inst .body { padding: 5px 0 0 10px; }
.inst .ms { width: 32px; height: 24px; border: 0; border-radius: 3px 0 0 3px; background: #505457; line-height: 20px; }
.inst .ms.s { margin-left: 1px; border-radius: 0 3px 3px 0; }
.inst .name { color: #f4f4f4; margin-left: 8px; letter-spacing: -1px; }
.inst .line2 { margin: 6px 0 0 72px; gap: 6px; }
.grp { height: 23px; background: #505457; border-radius: 4px; color: #000; overflow: hidden; }
.grp.rw { width: 69px; display: flex; justify-content: space-around; font: bold 16px/24px "DejaVu Sans Mono", monospace; -webkit-text-stroke: .6px #000; }
.empty { width: 109px; height: 111px; border: 2px solid #1c1f21; border-radius: 4px; margin-top: 61px; }
.tl-foot { flex: 1; display: flex; align-items: center; gap: 16px; color: #8d8f91; padding: 0 8px 6px 9px; }
.tl-foot span { margin-right: auto; color: #ccc; font-weight: 700; }
.timeline { margin: 7px 0 0 0; padding-left: 9px; border-left: 2px solid #606366; height: 578px; flex: none; overflow: visible; }
.timeline text { font-family: "Noto Sans", "Open Sans", sans-serif; }
.ruler text { font: 700 18px "Open Sans", sans-serif; fill: #ececec; letter-spacing: -1px; }
.ev rect { fill: #cf42e6; stroke: #a01fb8; }
.evin rect { fill: none; stroke: #e05cf2; stroke-width: 2px; }
.clip rect { fill: #a054eb; stroke: #5b14a3; }
.clipin rect { fill: none; stroke: #ae6cf2; stroke-width: 1.500px; }
.big { stroke: #000; stroke-width: .8px; }
.c1 { font-size: 80px; } .c2 { font-size: 58px; } .c3 { font-size: 60px; }
.timeline text.sh { font-family: "DejaVu Sans", sans-serif; font-size: 58px; }
.cl text { font: 700 15.500px "Open Sans", sans-serif; fill: #1a0830; }

.side { width: 52px; flex: none; margin: 12px 0; padding: 9px 0 0 9px; border-right: 2px solid #96999b; height: 514px; }
.side b { display: block; width: 31px; height: 37px; border: 1px solid #55585b; border-radius: 3px; background: #383c3f; margin-bottom: 9.500px; }
.side svg { margin: -1px; }
.side b.w { background: #fff; border-color: #fff; margin-bottom: 138px; }
.side b.g2 { margin-top: 107px; }
.padzone { padding: 20px 0 0 11px; flex: 1; }
.remote { position: relative; }
.remote p { position: absolute; left: 10px; top: 20px; font-weight: 700; font-size: 19.200px; color: #fff; letter-spacing: -.25px; white-space: nowrap; }
.kt { font-size: 19px; fill: #232930; }
.pads { display: flex; gap: 11.500px; margin-top: 12px; }
.pads.top { margin: 21px 0 0 136.500px; }
.gap { width: 260px; }
.pad { width: 260px; height: 202px; flex: none; position: relative; border: 6px solid #9b9da1; border-radius: 10px; background: linear-gradient(#8c8e90, #7d8594 80%, #7d8594); box-shadow: inset 0 0 0 2px #353b4c; }
.tl { border-top-left-radius: 24px; } .tr { border-top-right-radius: 24px; } .bl { border-bottom-left-radius: 24px; } .br { border-bottom-right-radius: 24px; }
.pad em { position: absolute; right: 4px; top: 5px; font-weight: 700; font-size: 14.500px; color: #1a1a1a; }
.tr em { right: 9px; }
.pad h3 { position: absolute; left: 0; right: 0; top: 48px; text-align: center; color: #000; font: 51px/62px "Noto Sans", sans-serif; white-space: nowrap; -webkit-text-stroke: .4px #000; }
.pad h3 small { font-size: 38px; letter-spacing: 0; margin-left: 1px; }
.pad h3 sup { font-size: 41px; line-height: 0; vertical-align: 10px; margin-left: 1px; }
.kb { position: absolute; left: 2px; right: 2px; bottom: 2px; height: 32px; border-top: 2px solid #454b5c; }
.kb i { position: absolute; bottom: 0; width: 5.500px; height: 15px; background: #fff; }
.kb i.up { bottom: 15px; }
.hc { position: absolute; left: -15px; top: 86px; } .hv { position: absolute; right: -13px; top: 72px; z-index: 2; } .hh { position: absolute; left: 101px; bottom: -13px; }

.tabs { height: 38px; flex: none; display: flex; align-items: center; position: relative; font-weight: 700; font-size: 17.500px; color: #cfd1d3; letter-spacing: -.6px; white-space: nowrap; }
.tabs .x { margin-left: 14px; }
.tabs .t1 { margin-left: 37px; width: 160px; }
.tabs .t2 { width: 111px; }
.tabs .t3 { width: 167.500px; }
.tabs .active { width: 158px; height: 35px; margin-top: -9px; border: 3px solid #55585b; border-top: 0; border-radius: 0 0 4px 4px; background: #24282b; text-align: center; line-height: 39px; color: #fff; }
.tabs .gear { margin-left: 5px; color: #a6a8aa; }

.transport { flex: 1; background: #24282b; display: flex; align-items: flex-start; padding: 11px 9px 0; border-bottom: 1px solid #3f3a38; }
.box { height: 37px; border: 2px solid #55585b; border-radius: 4px; background: #1c1d21; display: flex; align-items: center; flex: none; overflow: hidden; }
.box.lit { background: #5d6063; border-color: #74777a; }
.box svg { margin: -1px; }
.aq { justify-content: center; font-family: Lato, sans-serif; font-size: 22px; color: #ddd; }
.dots { width: 4px; height: 18px; margin-top: 9px; flex: none; background: repeating-linear-gradient(#b5b7b9 0 3px, transparent 3px 7px); }
.cap { width: 36px; height: 37px; background: #5d6063; flex: none; display: flex; }
.num { margin-left: auto; padding-right: 7px; font-size: 22px; color: #f0f0f0; display: flex; }
.num i { width: 32.500px; letter-spacing: -.5px; }
.num i:nth-child(3) { width: 45px; }
.lock svg { margin: -2px; }
.play { width: 300px; height: 48px; margin: -5px 0 0 9px; border: 3px solid #a9abad; border-radius: 6px; background: #46494b; display: flex; overflow: hidden; flex: none; }
.play b { flex: 1; display: flex; align-items: center; justify-content: center; }
.play .stop { background: #e3eaf4; }
.wcap { width: 36px; height: 37px; background: #f4f4f4; flex: none; display: flex; }
.bpm { width: 85px; padding-left: 18px; font-size: 20px; letter-spacing: -1.400px; color: #f0f0f0; }
.tempo > svg { margin-left: 13px; }
.sig { margin-left: 11px; border-left: 2px solid #55585b; height: 37px; line-height: 36px; padding-left: 22px; font-size: 20px; letter-spacing: -.6px; color: #f0f0f0; }
.meter { margin: -4px 0 0 13px; }

.synth { position: absolute; left: 837px; top: 520px; width: 1203px; height: 492px; background: #3d474e; border: 1px solid #2b3940; border-width: 0 1px 1px 0; font-family: "DejaVu Sans", Verdana, sans-serif; color: #fff; }
.titlebar { height: 40px; background: #273238; display: flex; align-items: center; padding: 6px 14px 0 12px; position: relative; }
.titlebar button { width: 90px; height: 27px; background: none; border: 2px solid #8e9a9f; border-radius: 9px; color: #fff; font: 13.500px/24px "DejaVu Sans", sans-serif; }
.titlebar h1 { font-weight: 400; font-size: 21px; margin: -1px 0 0 437px; width: 160px; padding-left: 1px; }
.wc { margin-left: auto; margin-top: -5px; }
.deck { height: 300px; display: flex; }
.bend { width: 99px; padding: 44px 7px 0 0; display: flex; flex-direction: column; align-items: center; font: 300 12px/22px Lato, sans-serif; letter-spacing: .2px; color: #d5d8da; flex: none; }
.bend span { width: 80px; text-align: center; }
.bend svg { margin: -1px 0 0 1px; }
.mod { width: 237px; flex: none; margin-right: 63px; }
.mod h2 { font: 300 18px/20px Lato, sans-serif; letter-spacing: 1.500px; color: #d5d8da; text-align: center; padding-top: 17px; height: 44px; }
.frame { height: 238px; border: 12px solid red; border-radius: 36px; padding: 4.500px 17px 0; }
.fil .frame { border-color: orange; } .env .frame { border-color: #32cd32; }
.env h2 { letter-spacing: 1.100px; }
.sel { width: 179px; height: 30px; border: 2px solid #8e9a9f; border-radius: 5px; background: #273238; display: flex; align-items: center; font-size: 19.700px; margin-bottom: .5px; }
.sel span { width: 133px; margin-right: 3px; text-align: center; line-height: 24px; white-space: nowrap; padding-top: 2px; }
.sel u { letter-spacing: -1.100px; }
.sel.tall { height: 60px; font-size: 19px; }
.hs { margin: 27px 0 0 13px; }
.knobs { margin: 11px 0 0 -4px; }
.bars { display: flex; align-items: flex-end; height: 187px; margin-left: 16px; gap: 3.700px; }
.bars div { width: 34px; text-align: center; font: 300 18px/20px Lato, sans-serif; color: #e0e3e5; }
.bars i { display: block; margin-bottom: 4px; }
.a { background: #adff2f; } .s { background: #32cd32; } .bars .r { background: #3a6045; }
.out { margin-left: 7px; width: 196px; flex: none; }
.out .vol { margin: -1px 0 0 136px; }
.logo text { font: bold 56px "Liberation Sans", sans-serif; fill: #9edcf0; stroke: #9edcf0; stroke-width: 1px; stroke-linejoin: round; }
.logo .d { fill: #7b9bc8; stroke: #7b9bc8; }
.logo .b { font-size: 62px; }
.bottom { display: flex; height: 151px; }
.kl { font: 14px "Open Sans", sans-serif; letter-spacing: -.7px; }
```
